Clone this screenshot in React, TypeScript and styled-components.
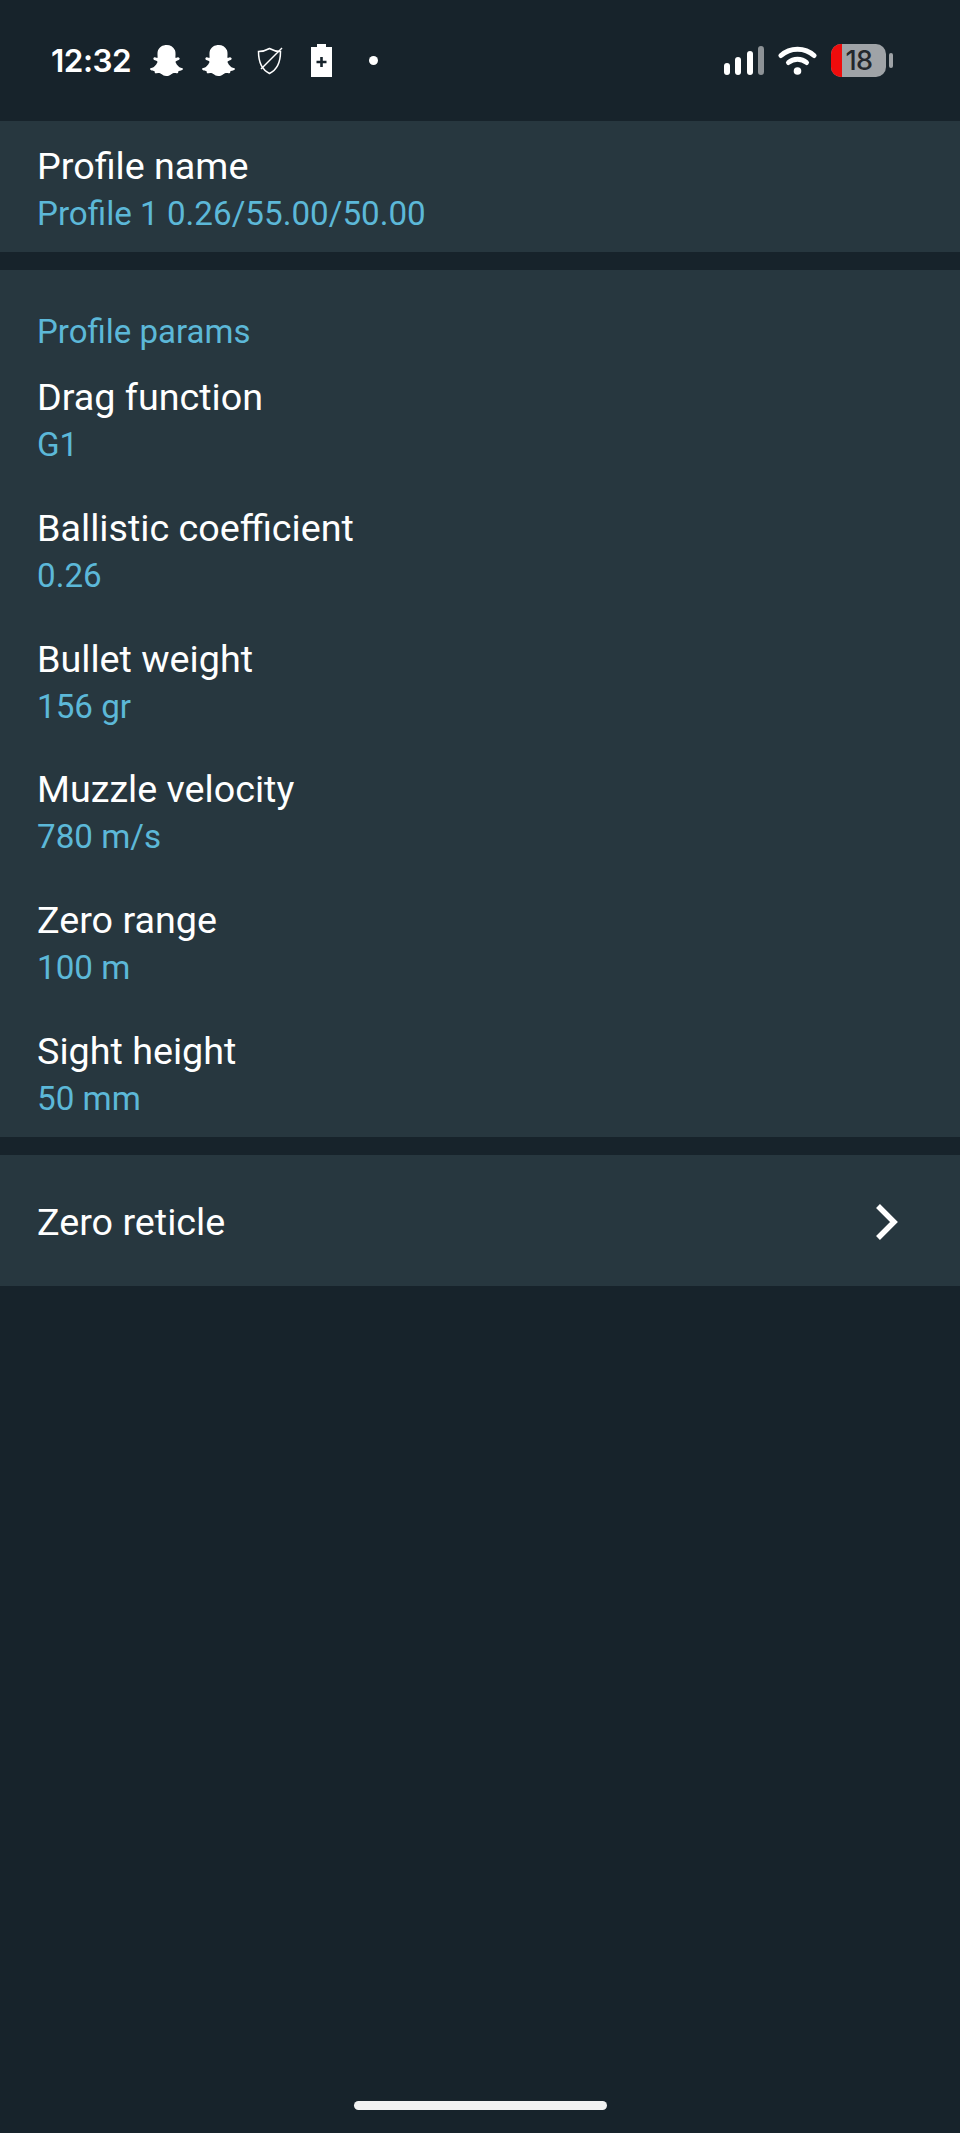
import React from 'react';
import styled, { createGlobalStyle } from 'styled-components';
import { FaSnapchatGhost } from 'react-icons/fa';

const GlobalStyle = createGlobalStyle`
  html, body {
    margin: 0;
    padding: 0;
    background: #17232b;
  }
  * {
    box-sizing: border-box;
  }
`;

const Page = styled.div`
  display: flex;
  flex-direction: column;
  width: 960px;
  height: 2133px;
  background: #17232b;
  font-family: Roboto, "Liberation Sans", sans-serif;
`;

const StatusBar = styled.div`
  display: flex;
  align-items: center;
  justify-content: space-between;
  height: 121px;
  padding: 0 67px 0 51px;
  color: #fff;
`;

const StatusLeft = styled.div`
  display: flex;
  align-items: center;
`;

const Clock = styled.span`
  width: 90px;
  font-family: Inter, Roboto, sans-serif;
  font-size: 31.5px;
  font-weight: 600;
  letter-spacing: -0.5px;
`;

const IconSlot = styled.div`
  display: flex;
  align-items: center;
  justify-content: center;
  width: 51.6px;
  height: 40px;
`;

const Dot = styled.span`
  width: 9px;
  height: 9px;
  border-radius: 50%;
  background: #fff;
`;

const StatusRight = styled.div`
  display: flex;
  align-items: center;
  gap: 14px;
`;

const BatteryWrap = styled.div`
  display: flex;
  align-items: center;
  gap: 3px;
`;

const BatteryBody = styled.div`
  display: flex;
  width: 55px;
  height: 33px;
  border-radius: 10px;
  overflow: hidden;
  background: #9fa3a7;
`;

const BatteryLow = styled.div`
  width: 11px;
  background: #f00c0c;
`;

const BatteryLevel = styled.span`
  flex: 1;
  padding-right: 10px;
  color: #24282c;
  font-family: Inter, Roboto, sans-serif;
  font-size: 27px;
  font-weight: 500;
  line-height: 33px;
  text-align: center;
  letter-spacing: -0.5px;
`;

const BatteryTip = styled.div`
  width: 4px;
  height: 15px;
  border-radius: 2px;
  background: #9fa3a7;
`;

const Card = styled.section`
  background: #27373f;
  margin-bottom: 18px;
`;

const SectionTitle = styled.div`
  padding: 41px 37px 0;
  color: #5cb8d8;
  font-size: 33px;
  line-height: 42px;
`;

const Row = styled.div`
  display: flex;
  flex-direction: column;
  justify-content: center;
  height: 130.67px;
  padding: 8px 37px 0;
`;

const NavRow = styled(Row)`
  flex-direction: row;
  align-items: center;
  justify-content: space-between;
  height: 131.5px;
  padding: 4px 62px 0 37px;
`;

const Label = styled.div`
  color: #fff;
  font-size: 37.7px;
  line-height: 46px;
`;

const Value = styled.div`
  color: #5cb8d8;
  font-size: 33.2px;
  line-height: 49px;
`;

const HomeArea = styled.div`
  display: flex;
  justify-content: center;
  margin-top: auto;
  padding-bottom: 23px;
`;

const HomeBar = styled.div`
  width: 253px;
  height: 9px;
  border-radius: 5px;
  background: #f1f2f2;
`;

const ShieldIcon = () => (
  <svg width="26" height="28" viewBox="0 0 26 28" fill="none" stroke="#fff" strokeWidth="1.5">
    <path d="M12.5 1.5 C9 3.5 5 4.5 1.5 4.5 C1.5 14 3.5 22 12.5 26.5 C21.5 22 23.5 14 23.5 4.5 C20 4.5 16 3.5 12.5 1.5 Z" />
    <path d="M4 22 L25 1" />
  </svg>
);

const ChargingBattery = () => (
  <svg width="21" height="33" viewBox="0 0 21 33">
    <path fill="#fff" d="M6 0 H15 V3 H21 V33 H0 V3 H6 Z" />
    <path fill="none" stroke="#17232b" strokeWidth="2.6" d="M5.5 18 H15.5 M10.5 13 V23" />
  </svg>
);

const SignalIcon = () => (
  <svg width="40" height="29" viewBox="0 0 40 29">
    <rect x="0" y="17" width="6" height="12" rx="3" fill="#fff" />
    <rect x="11" y="11" width="6" height="18" rx="3" fill="#fff" />
    <rect x="23" y="5" width="6" height="24" rx="3" fill="#fff" />
    <rect x="34" y="0" width="6" height="29" rx="3" fill="#8d9296" />
  </svg>
);

const WifiIcon = () => (
  <svg width="39" height="29" viewBox="0 0 39 29" fill="none" stroke="#fff" strokeWidth="5" strokeLinecap="round">
    <path d="M3 9.5 C12 1 27 1 36 9.5" />
    <path d="M10.5 16.5 C15.5 12 23.5 12 28.5 16.5" />
    <circle cx="19.5" cy="25" r="3.8" fill="#fff" stroke="none" />
  </svg>
);

const ChevronIcon = () => (
  <svg width="24" height="36" viewBox="0 0 24 36" fill="none" stroke="#fff" strokeWidth="5.5">
    <path d="M4 2 L20 18 L4 34" />
  </svg>
);

const params = [
  { label: 'Drag function', value: 'G1' },
  { label: 'Ballistic coefficient', value: '0.26' },
  { label: 'Bullet weight', value: '156 gr' },
  { label: 'Muzzle velocity', value: '780 m/s' },
  { label: 'Zero range', value: '100 m' },
  { label: 'Sight height', value: '50 mm' },
];

const App: React.FC = () => {
  return (
    <Page>
      <GlobalStyle />
      <StatusBar>
        <StatusLeft>
          <Clock>12:32</Clock>
          <IconSlot>
            <FaSnapchatGhost size={33} />
          </IconSlot>
          <IconSlot>
            <FaSnapchatGhost size={33} />
          </IconSlot>
          <IconSlot>
            <ShieldIcon />
          </IconSlot>
          <IconSlot>
            <ChargingBattery />
          </IconSlot>
          <IconSlot>
            <Dot />
          </IconSlot>
        </StatusLeft>
        <StatusRight>
          <SignalIcon />
          <WifiIcon />
          <BatteryWrap>
            <BatteryBody>
              <BatteryLow />
              <BatteryLevel>18</BatteryLevel>
            </BatteryBody>
            <BatteryTip />
          </BatteryWrap>
        </StatusRight>
      </StatusBar>

      <Card>
        <Row>
          <Label>Profile name</Label>
          <Value>Profile 1 0.26/55.00/50.00</Value>
        </Row>
      </Card>

      <Card>
        <SectionTitle>Profile params</SectionTitle>
        {params.map((param) => (
          <Row key={param.label}>
            <Label>{param.label}</Label>
            <Value>{param.value}</Value>
          </Row>
        ))}
      </Card>

      <Card>
        <NavRow>
          <Label>Zero reticle</Label>
          <ChevronIcon />
        </NavRow>
      </Card>

      <HomeArea>
        <HomeBar />
      </HomeArea>
    </Page>
  );
};

export default App;
